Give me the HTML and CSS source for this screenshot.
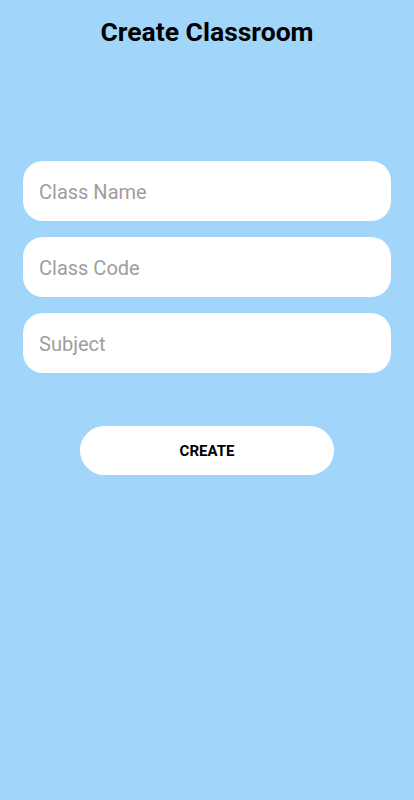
FILE: index.html
```html
<!DOCTYPE html>
<html lang="en">

<head>
    <meta charset="UTF-8">
    <meta name="viewport" content="width=device-width, initial-scale=1.0">
    <title>Create Classroom</title>
    <link rel="stylesheet" href="styles.css">
</head>

<body>
    <div class="container">
        <h1>Create Classroom</h1>
        <form class="form">
            <input class="field" type="text" placeholder="Class Name" />
            <input class="field" type="text" placeholder="Class Code" />
            <input class="field" type="text" placeholder="Subject" />
            <button class="create" type="button">CREATE</button>
        </form>
    </div>
</body>

</html>
```

FILE: styles.css
```css
body {
    font-family: Roboto, "Liberation Sans", sans-serif;
    margin: 0;
    padding: 0;
    background-color: #a1d6fa;
    min-height: 800px;
}

.container {
    padding: 14px 23px 0 23px;
}

h1 {
    margin: 0;
    font-size: 26.5px;
    font-weight: 700;
    line-height: 36px;
    text-align: center;
    color: #000;
}

.form {
    display: flex;
    flex-direction: column;
    gap: 16px;
    margin-top: 111px;
}

.field {
    box-sizing: border-box;
    width: 100%;
    height: 60px;
    padding: 2px 16px 0 16px;
    font-family: Roboto, "Liberation Sans", sans-serif;
    font-size: 20px;
    color: #222;
    background-color: white;
    border: none;
    border-radius: 20px;
    outline: none;
}

.field::placeholder {
    color: #9e9e9e;
}

.create {
    align-self: center;
    width: 254px;
    height: 49px;
    margin-top: 37px;
    font-family: Roboto, "Liberation Sans", sans-serif;
    font-size: 15px;
    font-weight: 700;
    color: black;
    background-color: white;
    border: none;
    border-radius: 25px;
    cursor: pointer;
}
```
